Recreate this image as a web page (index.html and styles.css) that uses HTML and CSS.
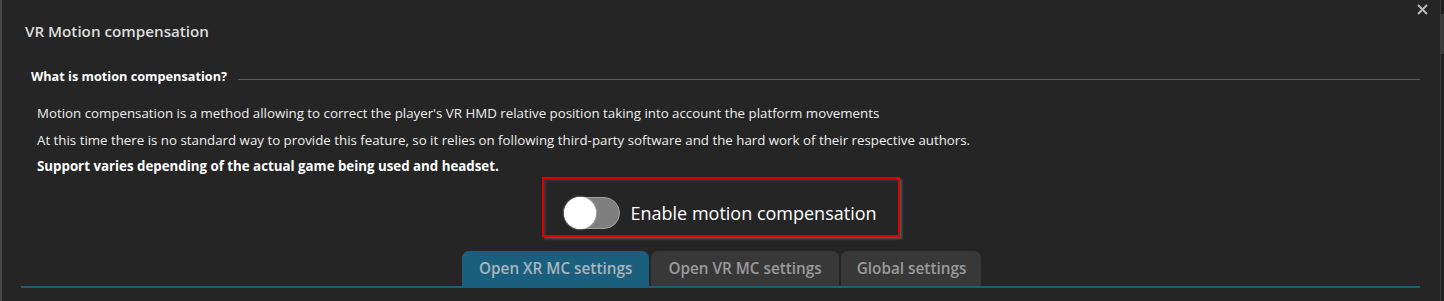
FILE: index.html
```html
<!DOCTYPE html>
<html lang="en">
<head>
    <meta charset="UTF-8">
    <meta name="viewport" content="width=device-width, initial-scale=1.0">
    <title>VR Motion compensation</title>
    <link rel="stylesheet" href="styles.css">
</head>
<body>
    <div class="window">
        <div class="dialog">
            <button class="close" type="button" aria-label="Close">
                <svg width="11" height="11" viewBox="0 0 11 11">
                    <path d="M1 1 L10 10 M10 1 L1 10" stroke="#b8b8b8" stroke-width="2"/>
                </svg>
            </button>
            <h2 class="dialog-title">VR Motion compensation</h2>

            <section class="group">
                <div class="group-header">
                    <span class="group-title">What is motion compensation?</span>
                    <span class="group-line"></span>
                </div>
                <p>Motion compensation is a method allowing to correct the player's VR HMD relative position taking into account the platform movements</p>
                <p>At this time there is no standard way to provide this feature, so it relies on following third-party software and the hard work of their respective authors.</p>
                <p class="strong">Support varies depending of the actual game being used and headset.</p>
            </section>

            <div class="toggle-row">
                <label class="toggle-box">
                    <span class="switch"><span class="knob"></span></span>
                    <span class="toggle-label">Enable motion compensation</span>
                </label>
            </div>

            <div class="tabs">
                <div class="tab active">Open XR MC settings</div>
                <div class="tab">Open VR MC settings</div>
                <div class="tab">Global settings</div>
            </div>
        </div>
        <div class="side-strip">
            <span class="strip-block"></span>
        </div>
    </div>
</body>
</html>
```

FILE: styles.css
```css
html, body {
    margin: 0;
    padding: 0;
    height: 100%;
    background: #252525;
    font-family: 'Open Sans', 'Noto Sans', sans-serif;
    color: #eeeeee;
    overflow: hidden;
}
.window {
    display: flex;
    height: 301px;
}
.dialog {
    position: relative;
    flex: 1;
    border-left: 2px solid #4a4a4a;
    padding: 0 20px 0 19px;
    background: #252525;
}
.close {
    position: absolute;
    top: 4px;
    right: 12px;
    width: 11px;
    height: 11px;
    padding: 0;
    border: none;
    background: none;
    cursor: pointer;
}
.close svg {
    display: block;
}
.dialog-title {
    margin: 0;
    padding: 21px 0 0 4px;
    height: 23px;
    line-height: 20px;
    font-size: 15.2px;
    font-weight: 600;
    color: #dddddd;
}
.group {
    margin-top: 22px;
}
.group-header {
    display: flex;
    align-items: center;
    height: 20px;
    margin-bottom: 14px;
}
.group-title {
    padding-left: 10px;
    font-size: 12.7px;
    font-weight: bold;
    color: #ffffff;
}
.group-line {
    flex: 1;
    height: 1px;
    margin: 7px 0 0 11px;
    background: #5a5a5a;
}
.group p {
    margin: 0;
    padding-left: 16px;
    height: 26.5px;
    line-height: 26px;
    font-size: 13.3px;
    color: #eeeeee;
}
.group p.strong {
    font-weight: bold;
    color: #ffffff;
}
.toggle-row {
    display: flex;
    justify-content: center;
    margin-top: -3px;
}
.toggle-box {
    display: flex;
    align-items: center;
    gap: 11px;
    box-sizing: border-box;
    width: 358px;
    height: 60px;
    padding: 12px 0 0 20px;
    border: 2px solid #e00000;
    box-shadow: 2px 2px 2px #555555, inset 2px 2px 3px #3a3a3a;
    cursor: pointer;
}
.switch {
    position: relative;
    width: 54px;
    height: 30px;
    border: 1px solid #a0a0a0;
    border-radius: 16px;
    background: #7f7f7f;
}
.knob {
    position: absolute;
    left: -1px;
    top: -1px;
    width: 32px;
    height: 32px;
    border-radius: 50%;
    background: #ffffff;
    box-shadow: 0 0 2px #ffffff;
}
.toggle-label {
    font-size: 18px;
    color: #ffffff;
}
.tabs {
    display: flex;
    gap: 2px;
    margin-top: 14px;
    padding-left: 441px;
    border-bottom: 2px solid #1b5f7f;
}
.tab {
    height: 35px;
    line-height: 34px;
    padding: 0 17px;
    border-radius: 7px 7px 0 0;
    background: #383838;
    font-size: 15.3px;
    font-weight: 600;
    color: #9a9a9a;
}
.tab:last-child {
    padding: 0 15px 0 16px;
}
.tab.active {
    background: #1b5f7f;
    color: #a9b4bb;
}
.side-strip {
    width: 3px;
    border-left: 1px solid #3c3c3c;
    background: #1f1f1f;
    padding-top: 14px;
}
.strip-block {
    display: block;
    height: 40px;
    background: #3a3a3a;
}
```
